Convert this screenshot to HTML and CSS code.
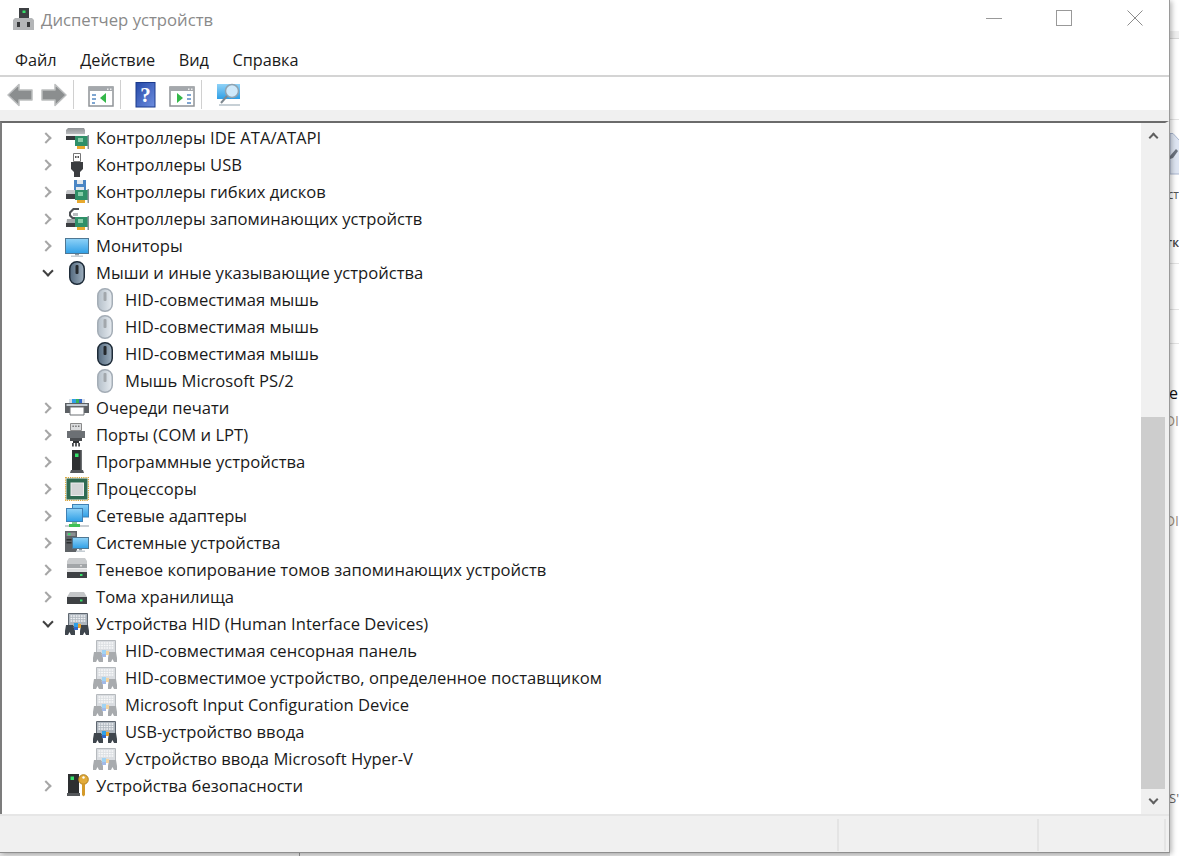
FILE: index.html
```html
<!DOCTYPE html>
<html lang="ru">
<head>
  <meta charset="UTF-8" />
  <title>Диспетчер устройств</title>
  <link rel="stylesheet" href="styles.css">
</head>
<body>
  <svg class="defs" width="0" height="0">
    <defs>
      <linearGradient id="screen" x1="0" y1="0" x2="0" y2="1"><stop offset="0" stop-color="#8fd2f7"/><stop offset="1" stop-color="#2f9fe6"/></linearGradient>
      <linearGradient id="mouseDark" x1="0" y1="0" x2="1" y2="0"><stop offset="0" stop-color="#53697e"/><stop offset="1" stop-color="#9fb0bf"/></linearGradient>
      <linearGradient id="mouseLight" x1="0" y1="0" x2="1" y2="0"><stop offset="0" stop-color="#b4bfc9"/><stop offset="1" stop-color="#e6ebf0"/></linearGradient>
      <linearGradient id="drive" x1="0" y1="0" x2="0" y2="1"><stop offset="0" stop-color="#8f9295"/><stop offset="1" stop-color="#dcdedf"/></linearGradient>
      <linearGradient id="helpBlue" x1="0" y1="0" x2="1" y2="1"><stop offset="0" stop-color="#2448a8"/><stop offset="1" stop-color="#6f8fe0"/></linearGradient>

      <symbol id="card" viewBox="0 0 24 24">
        <rect x="10" y="10" width="13" height="10" fill="#2f9068"/>
        <rect x="13" y="12" width="5" height="4" fill="#86cda8"/>
        <rect x="12" y="20" width="8" height="3" fill="#e8a92e"/>
        <rect x="22.500" y="9" width="1.500" height="14" fill="#8a9299"/>
      </symbol>

      <symbol id="i-ide" viewBox="0 0 24 24">
        <path d="M3 2h16l1 2v9H1V4z" fill="url(#drive)"/>
        <path d="M1 8h19v2H1z" fill="#f2f2f2"/>
        <path d="M1 10h19v4H1z" fill="#36393c"/>
        <use href="#card"/>
      </symbol>
      <symbol id="i-usb" viewBox="0 0 24 24">
        <path d="M8.500 0.500h7v8h-7z" fill="#fff" stroke="#777"/>
        <rect x="10" y="3" width="1.500" height="2" fill="#555"/><rect x="12.500" y="3" width="1.500" height="2" fill="#555"/>
        <path d="M6 9h12v7l-3 3v5H9v-5l-3-3z" fill="#3b3d40"/>
      </symbol>
      <symbol id="i-floppy" viewBox="0 0 24 24">
        <path d="M9 0h12v12H9z" fill="#4b86c4"/>
        <path d="M12 0h6v4h-6z" fill="#e3e8ec"/>
        <path d="M11 7h8v5h-8z" fill="#e3e8ec"/>
        <path d="M2 10h12v9H1v-7z" fill="#c6c8ca"/>
        <path d="M1 14h12v5H1z" fill="#3c3f42"/>
        <use href="#card"/>
      </symbol>
      <symbol id="i-storage" viewBox="0 0 24 24">
        <path d="M4 5l4-4h6v2H9L6 6v2l2 2h5l2 2H7L4 9z" fill="#4f5256"/>
        <path d="M8 6h5v3H8z" fill="#b9bcbf"/>
        <path d="M2 12h11v8H1z" fill="#a2a5a8"/>
        <path d="M1 16h12v4H1z" fill="#3c3f42"/>
        <use href="#card"/>
      </symbol>
      <symbol id="i-monitor" viewBox="0 0 24 24">
        <rect x="0.500" y="4.500" width="23" height="15" fill="url(#screen)" stroke="#4f7793"/>
        <path d="M10 20h4v1.500h-4z" fill="#8e9aa3"/>
        <path d="M6 21.500h12V23H6z" fill="#c5cdd3"/>
      </symbol>
      <symbol id="i-mouse-dark" viewBox="0 0 24 24">
        <rect x="4.750" y="0.750" width="14.500" height="22.500" rx="7" fill="url(#mouseDark)" stroke="#1e2b38" stroke-width="1.500"/>
        <rect x="10.500" y="4" width="3" height="9" rx="1" fill="#25292d"/>
      </symbol>
      <symbol id="i-mouse" viewBox="0 0 24 24">
        <rect x="4.750" y="0.750" width="14.500" height="22.500" rx="7" fill="url(#mouseLight)" stroke="#a4adb6" stroke-width="1.500"/>
        <rect x="10.500" y="4" width="3" height="9" rx="1" fill="#a2a7ac"/>
      </symbol>
      <symbol id="i-printer" viewBox="0 0 24 24">
        <path d="M4 3h16v5H4z" fill="#d4dee6"/>
        <path d="M7 3h4v4H7z" fill="#2f9fe6"/><path d="M11 3h3v4h-3z" fill="#35b45a"/><path d="M14 3h3v4h-3z" fill="#3468c8"/>
        <path d="M0 7h24v10H0z" fill="#5c6064"/>
        <path d="M1.500 8h21v2h-21z" fill="#c4ccd2"/>
        <path d="M5 11h14v8H5z" fill="#fff" stroke="#6c7074"/>
      </symbol>
      <symbol id="i-port" viewBox="0 0 24 24">
        <path d="M5.500 0.500h11v7h-11z" fill="#dadcde" stroke="#8a8a8a"/>
        <path d="M7.500 2.500h1.300V4H7.500zM10.300 2.500h1.300V4h-1.300zM13.100 2.500h1.300V4h-1.300z" fill="#666"/>
        <path d="M2 8h18v7H2z" fill="#6c7074"/>
        <path d="M5 15h12v3H5z" fill="#4a4d50"/>
        <path d="M8 18h6v2H8z" fill="#303234"/>
        <path d="M7 20h1.800v3.500H7zM10.100 20h1.800v3.500h-1.800zM13.200 20H15v3.500h-1.800z" fill="#4a4d50"/>
      </symbol>
      <symbol id="i-soft" viewBox="0 0 24 24">
        <path d="M7 0h10v20H7z" fill="#2d2f31"/>
        <path d="M15.500 0H17v20h-1.500z" fill="#6a6d70"/>
        <rect x="10" y="3.500" width="3.500" height="3.500" fill="#35e06a"/>
        <path d="M6 20h12l1 3H5z" fill="#55585b"/>
      </symbol>
      <symbol id="i-cpu" viewBox="0 0 24 24">
        <rect x="0.600" y="0.600" width="22.800" height="22.800" fill="none" stroke="#d9a63c" stroke-width="1.200" stroke-dasharray="1.300 .9"/>
        <rect x="1.500" y="1.500" width="21" height="21" fill="#2f6b52"/>
        <rect x="6" y="6" width="12.500" height="12.500" fill="#d3d5d6" stroke="#eeeeee"/>
      </symbol>
      <symbol id="i-net" viewBox="0 0 24 24">
        <rect x="7.500" y="0.500" width="16" height="12.500" fill="url(#screen)" stroke="#3f81b5"/>
        <rect x="1.500" y="4.500" width="16" height="13" fill="url(#screen)" stroke="#3f81b5"/>
        <path d="M0 21h24v2H0z" fill="#c9ced2"/>
        <path d="M7 18h5v2H7z" fill="#7fc98c"/>
        <path d="M4 20h11v3H4z" fill="#3fbf55"/>
      </symbol>
      <symbol id="i-system" viewBox="0 0 24 24">
        <path d="M0 0h12v21H0z" fill="#5e6266"/>
        <path d="M1.500 1.500h9v3.500h-9z" fill="#8b8f92"/><rect x="3" y="2.300" width="2.500" height="1.800" fill="#35e06a"/>
        <path d="M1.500 8h5v1.400h-5zM1.500 11h5v1.400h-5z" fill="#2c2e30"/>
        <rect x="7.500" y="6.500" width="16" height="11" fill="url(#screen)" stroke="#4f7793"/>
        <path d="M14 18h3v1.500h-3z" fill="#8e9aa3"/>
        <path d="M11 19.500h9V21h-9z" fill="#c5cdd3"/>
      </symbol>
      <symbol id="i-shadow" viewBox="0 0 24 24">
        <path d="M4 0h16l2 3v7H2V3z" fill="#c9cbcd"/>
        <path d="M2 6h20v4H2z" fill="#a3a6a9"/>
        <rect x="15" y="7" width="2" height="1.500" fill="#d9d9d9"/>
        <path d="M2 10.500h20V20H2z" fill="#dedfe0"/>
        <path d="M2 14h20v6H2z" fill="#3e4144"/>
        <rect x="15" y="16" width="2.500" height="2" fill="#35e06a"/>
      </symbol>
      <symbol id="i-volume" viewBox="0 0 24 24">
        <path d="M5 7h14l3 5v7H2v-7z" fill="#c4c6c8"/>
        <path d="M2 12h20v7H2z" fill="#3e4144"/>
        <rect x="15" y="14.500" width="2.500" height="2" fill="#35e06a"/>
      </symbol>
      <symbol id="i-hid" viewBox="0 0 24 24">
        <path d="M3.500 1.500h19v13h-19z" fill="#aeb6be" stroke="#5f6770"/>
        <path d="M5.500 4h15M5.500 6.500h15M5.500 9h15" stroke="#f2f4f6" stroke-width="1.300" stroke-dasharray="1.800 .8"/>
        <path d="M1 13h7l2 6v4H6l-1.500-3L3 23H0v-4z" fill="#3f464d"/>
        <path d="M16 13h7l1 6v4h-3l-1.500-3L18 23h-3v-4z" fill="#3f464d"/>
        <path d="M9 11h4v4H9z" fill="#2f9fe6"/><path d="M13 12h3v4h-3z" fill="#e7a12f"/>
        <path d="M9 15h4v3H9z" fill="#3468c8"/>
      </symbol>
      <symbol id="i-security" viewBox="0 0 24 24">
        <path d="M3 0h11v19H3z" fill="#2d2f31"/>
        <rect x="5.500" y="2.500" width="3.500" height="3.500" fill="#35e06a"/>
        <path d="M2 19h13v3H2z" fill="#55585b"/>
        <circle cx="18.500" cy="5.500" r="4.800" fill="#e2ab3a" stroke="#b17f1c"/>
        <circle cx="18.500" cy="3.500" r="1.200" fill="#fff"/>
        <path d="M17 9.500h3V21l-1.500 1.500L17 21z" fill="#d49a2a"/>
      </symbol>
    </defs>
  </svg>

  <div class="window">
    <div class="titlebar">
      <svg class="app-icon" width="21" height="22" viewBox="0 0 21 22">
        <path d="M6 0h10v11H6z" fill="#3d4043"/>
        <rect x="9.500" y="2.500" width="3" height="2.500" fill="#35e06a"/>
        <path d="M2 10h17l2 2v10H0V12z" fill="#b4b6b8"/>
        <path d="M4 14h3v5H4zM14 14h3v5h-3z" fill="#36383a"/>
      </svg>
      <span class="title">Диспетчер устройств</span>
      <div class="caption-btns">
        <span class="cap-btn"><svg width="16" height="16" viewBox="0 0 16 16"><path d="M0 8.500h16" stroke="#999"/></svg></span>
        <span class="cap-btn"><svg width="16" height="16" viewBox="0 0 16 16"><rect x="0.500" y="0.500" width="15" height="15" fill="none" stroke="#999"/></svg></span>
        <span class="cap-btn"><svg width="16" height="16" viewBox="0 0 16 16"><path d="M.5.500l15 15M15.500.500l-15 15" stroke="#8c8c8c"/></svg></span>
      </div>
    </div>

    <div class="menubar">
      <span>Файл</span>
      <span>Действие</span>
      <span>Вид</span>
      <span>Справка</span>
    </div>

    <div class="toolbar">
      <svg class="tool-arrow" width="26" height="24" viewBox="0 0 26 24"><path d="M1 12L12 1.500V7h13v10H12v5.500z" fill="#8b8e8f" stroke="#bcbebf" stroke-width="1.500" stroke-linejoin="round"/></svg>
      <svg width="26" height="24" viewBox="0 0 26 24"><path d="M25 12L14 1.500V7H1v10h13v5.500z" fill="#8b8e8f" stroke="#bcbebf" stroke-width="1.500" stroke-linejoin="round"/></svg>
      <i class="tool-sep"></i>
      <svg width="26" height="24" viewBox="0 0 26 24">
        <rect x="1" y="4" width="24" height="19" fill="#fff" stroke="#8f9397" stroke-width="1.500"/>
        <path d="M1 4h24v4H1z" fill="#a4a8ac"/>
        <path d="M19 5.500h1.500V7H19zM22 5.500h1.500V7H22z" fill="#eee"/>
        <path d="M4 11h4v2H4zM4 15h4v2H4zM4 19h3v2H4z" fill="#7fa6d1"/>
        <path d="M18 10v10l-6-5z" fill="#35b84a"/>
      </svg>
      <i class="tool-sep"></i>
      <svg class="tool-help" width="22" height="26" viewBox="0 0 22 26">
        <rect x="1" y="0.500" width="19" height="24.500" fill="url(#helpBlue)" stroke="#1b3a8c"/>
        <text x="10.500" y="20" class="help-mark">?</text>
      </svg>
      <svg width="26" height="24" viewBox="0 0 26 24">
        <rect x="1" y="4" width="24" height="19" fill="#fff" stroke="#8f9397" stroke-width="1.500"/>
        <path d="M1 4h24v4H1z" fill="#a4a8ac"/>
        <path d="M19 5.500h1.500V7H19zM22 5.500h1.500V7H22z" fill="#eee"/>
        <path d="M18 11h4v2h-4zM18 15h4v2h-4zM18 19h4v2h-4z" fill="#7fa6d1"/>
        <path d="M8 10v10l6-5z" fill="#35b84a"/>
      </svg>
      <i class="tool-sep"></i>
      <svg width="26" height="26" viewBox="0 0 26 26">
        <rect x="1" y="2" width="23" height="15" fill="url(#screen)"/>
        <circle cx="16" cy="9" r="6.500" fill="#cfe9fa" stroke="#8ea3b2" stroke-width="1.500"/>
        <path d="M11 14l-6 7" stroke="#7d8890" stroke-width="2"/>
        <path d="M3 23h21" stroke="#b4c0c9" stroke-width="1.500"/>
      </svg>
    </div>

    <div class="strip"></div>

    <div class="content">
      <ul class="tree">
        <li class="row"><span class="chev"></span><svg class="ico"><use href="#i-ide"/></svg>Контроллеры IDE ATA/ATAPI</li>
        <li class="row"><span class="chev"></span><svg class="ico"><use href="#i-usb"/></svg>Контроллеры USB</li>
        <li class="row"><span class="chev"></span><svg class="ico"><use href="#i-floppy"/></svg>Контроллеры гибких дисков</li>
        <li class="row"><span class="chev"></span><svg class="ico"><use href="#i-storage"/></svg>Контроллеры запоминающих устройств</li>
        <li class="row"><span class="chev"></span><svg class="ico"><use href="#i-monitor"/></svg>Мониторы</li>
        <li class="row"><span class="chev open"></span><svg class="ico"><use href="#i-mouse-dark"/></svg>Мыши и иные указывающие устройства</li>
        <li class="row child"><svg class="ico"><use href="#i-mouse"/></svg>HID-совместимая мышь</li>
        <li class="row child"><svg class="ico"><use href="#i-mouse"/></svg>HID-совместимая мышь</li>
        <li class="row child"><svg class="ico"><use href="#i-mouse-dark"/></svg>HID-совместимая мышь</li>
        <li class="row child"><svg class="ico"><use href="#i-mouse"/></svg>Мышь Microsoft PS/2</li>
        <li class="row"><span class="chev"></span><svg class="ico"><use href="#i-printer"/></svg>Очереди печати</li>
        <li class="row"><span class="chev"></span><svg class="ico"><use href="#i-port"/></svg>Порты (COM и LPT)</li>
        <li class="row"><span class="chev"></span><svg class="ico"><use href="#i-soft"/></svg>Программные устройства</li>
        <li class="row"><span class="chev"></span><svg class="ico"><use href="#i-cpu"/></svg>Процессоры</li>
        <li class="row"><span class="chev"></span><svg class="ico"><use href="#i-net"/></svg>Сетевые адаптеры</li>
        <li class="row"><span class="chev"></span><svg class="ico"><use href="#i-system"/></svg>Системные устройства</li>
        <li class="row"><span class="chev"></span><svg class="ico"><use href="#i-shadow"/></svg>Теневое копирование томов запоминающих устройств</li>
        <li class="row"><span class="chev"></span><svg class="ico"><use href="#i-volume"/></svg>Тома хранилища</li>
        <li class="row"><span class="chev open"></span><svg class="ico"><use href="#i-hid"/></svg>Устройства HID (Human Interface Devices)</li>
        <li class="row child"><svg class="ico faded"><use href="#i-hid"/></svg>HID-совместимая сенсорная панель</li>
        <li class="row child"><svg class="ico faded"><use href="#i-hid"/></svg>HID-совместимое устройство, определенное поставщиком</li>
        <li class="row child"><svg class="ico faded"><use href="#i-hid"/></svg>Microsoft Input Configuration Device</li>
        <li class="row child"><svg class="ico"><use href="#i-hid"/></svg>USB-устройство ввода</li>
        <li class="row child"><svg class="ico faded"><use href="#i-hid"/></svg>Устройство ввода Microsoft Hyper-V</li>
        <li class="row"><span class="chev"></span><svg class="ico"><use href="#i-security"/></svg>Устройства безопасности</li>
      </ul>
      <div class="scrollbar">
        <div class="sb-btn"><span class="sb-arrow up"></span></div>
        <div class="sb-track"><div class="sb-thumb"></div></div>
        <div class="sb-btn"><span class="sb-arrow down"></span></div>
      </div>
    </div>

    <div class="statusbar">
      <span class="cell cell-main"></span>
      <span class="cell cell-mid"></span>
      <span class="cell cell-end"></span>
    </div>
  </div>

  <div class="behind">
    <svg class="behind-doc" width="10" height="42" viewBox="0 0 10 42">
      <path d="M0 .5h3l6.500 7V41H0z" fill="#dfe6f3" stroke="#a9b6cf"/>
      <path d="M0 23l6-7 2 2-5 7-3 1z" fill="#6d7480"/>
    </svg>
    <span class="frag frag-1">ст</span>
    <span class="frag frag-2">тк</span>
    <span class="frag frag-3">е</span>
    <span class="frag frag-4 link">DI</span>
    <span class="frag frag-5 link">DI</span>
    <span class="frag frag-6">S'</span>
  </div>
  <span class="edge-mark"></span>
</body>
</html>
```

FILE: styles.css
```css
* {
  box-sizing: border-box;
}
html, body {
  margin: 0;
  height: 100%;
  overflow: hidden;
}
body {
  display: flex;
  background: #e2e2e2;
  font-family: "Open Sans", "Noto Sans", sans-serif;
  color: #1a1a1a;
}
.defs {
  position: absolute;
}
.window {
  width: 1170px;
  height: 853px;
  flex: none;
  display: flex;
  flex-direction: column;
  background: #fff;
  border-right: 1px solid #9a9a9a;
  border-bottom: 1px solid #8f8f8f;
  box-shadow: 2px 1px 5px rgba(0,0,0,0.28);
  position: relative;
  z-index: 1;
}
.titlebar {
  height: 44px;
  display: flex;
  align-items: center;
  padding-left: 13px;
}
.app-icon {
  margin-right: 7px;
  margin-top: -6px;
}
.title {
  font-size: 16.7px;
  color: #8a8a8a;
  margin-top: -5px;
}
.caption-btns {
  margin-left: auto;
  margin-right: -1px;
  display: flex;
  margin-top: -8px;
}
.cap-btn {
  width: 70.5px;
  display: flex;
  justify-content: center;
}
.menubar {
  height: 33px;
  display: flex;
  gap: 23.5px;
  padding: 1px 0 0 15px;
  font-size: 16.3px;
  line-height: 30px;
  border-bottom: 2px solid #d4d4d4;
}
.toolbar {
  height: 33px;
  display: flex;
  align-items: center;
  padding: 2px 0 0 7px;
}
.tool-arrow {
  margin-right: 8px;
}
.tool-help {
  margin: 0 12px 0 0;
}
.tool-sep {
  width: 1px;
  height: 29px;
  background: #d0d0d0;
  margin: 0 14px 0 6px;
}
.help-mark {
  font-family: "Liberation Serif", serif;
  font-size: 21px;
  font-weight: bold;
  fill: #fff;
  text-anchor: middle;
}
.strip {
  height: 11px;
  background: #f0f0f0;
}
.content {
  flex: 1;
  min-height: 0;
  display: flex;
  border-top: 2px solid #6b6b6b;
  border-left: 2px solid #7c7c7c;
  border-right: 4px solid #f0f0f0;
}
.tree {
  list-style: none;
  flex: 1;
  margin: 0;
  padding: 1px 0 0;
}
.row {
  height: 27px;
  display: flex;
  align-items: center;
  padding-left: 40px;
  font-size: 16.6px;
  white-space: nowrap;
}
.row.child {
  padding-left: 91px;
}
.chev {
  width: 8px;
  height: 8px;
  margin-right: 15px;
  border-top: 2px solid #a6a6a6;
  border-right: 2px solid #a6a6a6;
  transform: rotate(45deg);
  flex: none;
}
.chev.open {
  border-color: #404040;
  transform: translate(2px, -2px) rotate(135deg);
}
.ico {
  width: 24px;
  height: 24px;
  flex: none;
  margin-right: 7px;
}
.child .ico {
  margin-right: 8px;
}
.faded {
  opacity: 0.45;
}
.scrollbar {
  width: 24px;
  flex: none;
  display: flex;
  flex-direction: column;
  background: #f0f0f0;
}
.sb-btn {
  height: 25px;
  flex: none;
  display: flex;
  align-items: center;
  justify-content: center;
}
.sb-arrow {
  width: 7px;
  height: 7px;
  border-top: 2px solid #606060;
  border-right: 2px solid #606060;
}
.sb-arrow.up {
  transform: translateY(2px) rotate(-45deg);
}
.sb-arrow.down {
  transform: translateY(-2px) rotate(135deg);
}
.sb-track {
  flex: 1;
  display: flex;
  flex-direction: column;
  justify-content: flex-end;
}
.sb-thumb {
  height: 372px;
  background: #cdcdcd;
}
.statusbar {
  height: 38px;
  flex: none;
  display: flex;
  background: #f0f0f0;
  border-top: 2px solid #e6e6e6;
  padding: 3px 0 1px;
}
.cell {
  border-right: 2px solid #e4e4e4;
}
.cell-main {
  width: 839px;
}
.cell-mid {
  width: 200px;
}
.cell-end {
  flex: 1;
  margin-right: 3px;
}
.behind {
  flex: 1;
  position: relative;
  font-size: 15px;
  color: #333;
  background: linear-gradient(#fff 31px, #f0f0f0 31px, #f0f0f0 38px, #d8d8d8 38px, #d8d8d8 39px, #fff 39px, #fff 119px, #e4e4e4 119px, #e4e4e4 120px, #fff 120px, #fff 263px, #e4e4e4 263px, #e4e4e4 264px, #fff 264px, #fff 309px, #e4e4e4 309px, #e4e4e4 310px, #fff 310px, #fff 343px, #e4e4e4 343px, #e4e4e4 344px, #fff 344px);
}
/* text of the window behind, its left part goes under .window */
.frag {
  position: absolute;
  right: 0;
  line-height: 20px;
  white-space: nowrap;
}
.frag-1 { top: 185px; font-size: 12px; color: #555; }
.frag-2 { top: 233px; font-size: 12px; color: #444; font-weight: 600; }
.frag-3 { top: 383px; font-size: 16px; color: #111; right: 1px; }
.frag-4 { top: 411px; font-size: 14px; }
.frag-5 { top: 511px; font-size: 14px; }
.frag-6 { top: 788px; font-size: 13px; color: #666; }
.link {
  color: #9c8f80;
}
.behind-doc {
  position: absolute;
  left: 0;
  top: 133px;
}
.edge-mark {
  position: absolute;
  left: 299px;
  top: 853px;
  width: 1px;
  height: 3px;
  background: #8f8f8f;
}
```
